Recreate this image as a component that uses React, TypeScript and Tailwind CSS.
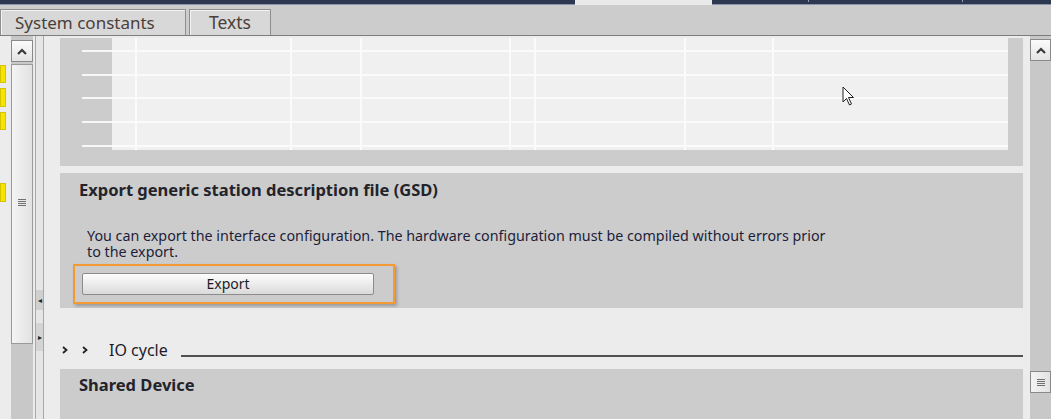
const colWidths = [25, 155, 70, 149, 25, 150, 88, 234]
const rowHeights = [14, 24, 23, 24, 24, 3]

function ScrollUp({ className }: { className?: string }) {
  return (
    <div className={`flex items-center justify-center border border-[#8a8a8a] bg-gradient-to-b from-[#fbfbfb] to-[#e4e4e4] ${className ?? ''}`}>
      <svg width="10" height="7" viewBox="0 0 10 7">
        <path d="M1 6 L5 2 L9 6" fill="none" stroke="#3a3a3a" strokeWidth="2.2" />
      </svg>
    </div>
  )
}

function Grip() {
  return (
    <div className="flex flex-col gap-[1px]">
      <span className="h-[1px] w-[8px] bg-[#707070]" />
      <span className="h-[1px] w-[8px] bg-[#707070]" />
      <span className="h-[1px] w-[8px] bg-[#707070]" />
      <span className="h-[1px] w-[8px] bg-[#707070]" />
    </div>
  )
}

function Chevron() {
  return (
    <svg width="6" height="8" viewBox="0 0 6 8">
      <path d="M1 1 L4.5 4 L1 7" fill="none" stroke="#222" strokeWidth="1.8" />
    </svg>
  )
}

function Cursor() {
  return (
    <svg className="absolute left-[782px] top-[50px]" width="14" height="21" viewBox="0 0 14 21">
      <path d="M1 1 L1 16 L4.5 12.5 L7.5 19 L9.5 18 L6.5 11.5 L11.5 11.5 Z" fill="#fff" stroke="#222" strokeWidth="1" />
    </svg>
  )
}

export default function App() {
  return (
    <div className="flex h-[419px] w-[1051px] flex-col overflow-hidden bg-[#ececec] font-['Noto_Sans',sans-serif] text-[#1c1c28]">
      {/* window top edge */}
      <div className="flex h-[5px] shrink-0">
        <div className="w-[575px] border-b border-[#8a93a8] bg-[#2c3850]" />
        <div className="w-[137px] bg-[#e9e9e9]" />
        <div className="flex flex-1 border-b border-[#8a93a8] bg-[#2c3850]">
          <span className="ml-[96px] h-[2px] w-[1px] bg-[#9aa0ad]" />
          <span className="ml-[153px] h-[2px] w-[1px] bg-[#9aa0ad]" />
        </div>
      </div>

      {/* tab strip */}
      <div className="flex h-[31px] shrink-0 items-end gap-[3px] border-b border-[#7d7d7d] bg-[#cccccc]">
        <div className="flex h-[26px] w-[186px] items-center border border-b-0 border-[#8f8f8f] bg-[#d8d8d8] pl-[14px] text-[17px] text-[#4a4038] shadow-[inset_1px_1px_0_#f2f2f2]">
          System constants
        </div>
        <div className="flex h-[26px] w-[82px] items-center justify-center border border-b-0 border-[#8f8f8f] bg-[#d8d8d8] text-[17.5px] text-[#4a4038] shadow-[inset_1px_1px_0_#f2f2f2]">
          Texts
        </div>
      </div>

      <div className="flex min-h-0 flex-1">
        {/* left edge: cut-off table markers */}
        <div className="flex w-[11px] shrink-0 flex-col">
          <div className="mt-[29px] h-[18px] w-[6px] bg-[#f5e400] shadow-[inset_0_0_0_1px_#d8c400]" />
          <div className="mt-[5px] h-[19px] w-[6px] bg-[#f5e400] shadow-[inset_0_0_0_1px_#d8c400]" />
          <div className="mt-[5px] h-[18px] w-[6px] bg-[#f5e400] shadow-[inset_0_0_0_1px_#d8c400]" />
          <div className="mt-[53px] h-[19px] w-[6px] bg-[#f5e400] shadow-[inset_0_0_0_1px_#d8c400]" />
        </div>

        {/* left scrollbar */}
        <div className="flex w-[22px] shrink-0 flex-col bg-[#c8c8c8] pt-[4px]">
          <ScrollUp className="h-[22px] w-[22px]" />
          <div className="mt-[2px] flex h-[280px] flex-col items-center justify-center border border-[#9a9a9a] bg-gradient-to-r from-[#f4f4f4] to-[#e2e2e2] pb-[4px]">
            <Grip />
          </div>
        </div>

        {/* narrow splitter */}
        <div className="ml-[2px] flex w-[9px] shrink-0 flex-col border-x border-[#a8a8a8] bg-[#e6e6e6]">
          <div className="mt-[254px] flex h-[20px] items-center justify-center bg-[#cfcfcf] text-[8px] leading-none text-[#222]">◂</div>
          <div className="mt-[13px] flex h-[28px] items-center justify-center bg-[#d4d4d4] text-[8px] leading-none text-[#222]">▸</div>
        </div>

        {/* main content */}
        <div className="relative ml-[16px] flex w-[963px] shrink-0 flex-col pt-[2px]">
          {/* table panel */}
          <div className="flex h-[128px] shrink-0 bg-[#cccccc]">
            <div className="flex flex-col pl-[22px]">
              {rowHeights.map((h, r) => (
                <div key={r} className="flex" style={{ height: h }}>
                  <div className={`w-[30px] ${r < rowHeights.length - 1 ? 'border-b-2 border-[#f7f7f7]' : ''}`} />
                  {colWidths.map((w, c) => (
                    <div
                      key={c}
                      className={`bg-[#f0f0f0] ${c < colWidths.length - 1 ? 'border-r-2' : ''} ${r < rowHeights.length - 1 ? 'border-b-2' : ''} border-[#fbfbfb]`}
                      style={{ width: w }}
                    />
                  ))}
                </div>
              ))}
            </div>
          </div>

          {/* GSD export */}
          <div className="mt-[7px] flex h-[135px] shrink-0 flex-col bg-[#cccccc] pl-[19px] pt-[6px]">
            <div className="text-[16.5px] font-bold leading-[22px] text-[#23232b]">Export generic station description file (GSD)</div>
            <div className="mt-[27px] pl-[8px] text-[14.3px] leading-[16px] text-[#1e1e3a]">
              <div className="h-[16px]">
                You can export the interface configuration. The hardware configuration must be compiled without errors prior
              </div>
              <div className="h-[16px]">to the export.</div>
            </div>
            <div className="ml-[-6px] mt-[4px] flex h-[40px] w-[322px] items-center border-2 border-[#f39a36] pl-[7px] shadow-[2px_2px_3px_rgba(0,0,0,0.25)]">
              <button className="h-[22px] w-[292px] rounded-[2px] border border-[#8c8c8c] bg-gradient-to-b from-[#fdfdfd] via-[#ececec] to-[#dadada] text-[14px] leading-none text-[#1c1c28]">
                Export
              </button>
            </div>
          </div>

          {/* IO cycle */}
          <div className="h-[61px] shrink-0 pt-[32px]">
            <div className="flex h-[20px] items-center">
              <div className="flex items-center gap-[14px] pl-[2px]">
                <Chevron />
                <Chevron />
              </div>
              <span className="ml-[21px] text-[16px] leading-[20px]">IO cycle</span>
              <div className="ml-[13px] mt-[12px] h-[2px] flex-1 bg-[#505050]" />
            </div>
          </div>

          {/* Shared device */}
          <div className="flex-1 bg-[#cccccc] pl-[19px] pt-[5px]">
            <div className="text-[16.5px] font-bold leading-[22px] text-[#23232b]">Shared Device</div>
          </div>

          <Cursor />
        </div>

        {/* right scrollbar */}
        <div className="ml-[7px] flex w-[21px] shrink-0 flex-col bg-[#c8c8c8] pt-[3px]">
          <ScrollUp className="h-[22px] w-[21px]" />
          <div className="mt-[310px] flex h-[22px] items-center justify-center border border-[#8a8a8a] bg-gradient-to-r from-[#f4f4f4] to-[#e2e2e2]">
            <Grip />
          </div>
        </div>
      </div>
    </div>
  )
}
